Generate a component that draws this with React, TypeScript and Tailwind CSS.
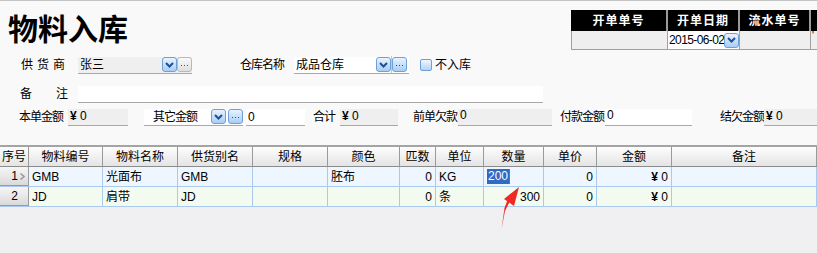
import React from 'react';

const font = { fontFamily: "'Liberation Sans','Noto Sans CJK SC',sans-serif" };

function DropBtn({ gray = false }: { gray?: boolean }) {
  return (
    <div
      className={`w-[15px] h-[15px] rounded-[3px] border flex items-center justify-center shrink-0 ${
        gray ? 'border-[#b8b8b8] bg-gradient-to-b from-[#fafafa] to-[#dedede]' : 'border-[#6d9fd8] bg-gradient-to-b from-[#e8f3ff] to-[#a9cdf5]'
      }`}
    >
      <svg width="9" height="6" viewBox="0 0 9 6">
        <path d="M1 1 L4.5 4.5 L8 1" fill="none" stroke="#1f4f99" strokeWidth="2" />
      </svg>
    </div>
  );
}

function DotsBtn({ gray = false }: { gray?: boolean }) {
  return (
    <div
      className={`w-[15px] h-[15px] rounded-[3px] border flex items-end justify-center pb-[5px] gap-[2px] shrink-0 ${
        gray ? 'border-[#b8b8b8] bg-gradient-to-b from-[#fafafa] to-[#dedede]' : 'border-[#6d9fd8] bg-gradient-to-b from-[#e8f3ff] to-[#a9cdf5]'
      }`}
    >
      <span className={`w-px h-px ${gray ? 'bg-[#555]' : 'bg-[#1f4f99]'}`} />
      <span className={`w-px h-px ${gray ? 'bg-[#555]' : 'bg-[#1f4f99]'}`} />
      <span className={`w-px h-px ${gray ? 'bg-[#555]' : 'bg-[#1f4f99]'}`} />
    </div>
  );
}

function Field({ w, gray, children }: { w: string; gray?: boolean; children?: React.ReactNode }) {
  return (
    <div
      className={`${w} h-[17px] border-b border-[#a8a8a8] flex items-center pl-[2px] text-[12px] text-black leading-none shrink-0 ${
        gray ? 'bg-[#efefef]' : 'bg-white'
      }`}
    >
      {children}
    </div>
  );
}

function Label({ cls, children }: { cls: string; children: React.ReactNode }) {
  return <div className={`${cls} shrink-0 whitespace-nowrap tracking-[-1px]`}>{children}</div>;
}

function Yen() {
  return (
    <span className="-mt-[2px]">
      <b>¥</b> 0
    </span>
  );
}

const cols = [29, 74, 75, 75, 75, 72, 36, 48, 60, 53, 75, 145];
const heads = ['序号', '物料编号', '物料名称', '供货别名', '规格', '颜色', '匹数', '单位', '数量', '单价', '金额', '备注'];

type Row = { n: string; code: string; name: string; alias: string; color: string; pcs: string; unit: string; qty: string; price: string; amt: string };
const rows: Row[] = [
  { n: '1', code: 'GMB', name: '光面布', alias: 'GMB', color: '胚布', pcs: '0', unit: 'KG', qty: '200', price: '0', amt: '¥0' },
  { n: '2', code: 'JD', name: '肩带', alias: 'JD', color: '', pcs: '0', unit: '条', qty: '300', price: '0', amt: '¥0' },
];

export default function App() {
  return (
    <div className="w-[817px] h-[253px] overflow-hidden bg-[#f0f0f2] relative" style={font}>
      {/* form */}
      <div className="h-[145px] bg-[#f9f9f9] border-t border-[#c4c4c4]">
        <div className="flex h-[54px]">
          <div className="w-[571px] shrink-0 pl-[8px] pt-[8px]">
            <div className="text-[30px] font-bold leading-[36px] text-black" style={{ fontFamily: "'Noto Sans CJK SC',sans-serif" }}>
              物料入库
            </div>
          </div>
          <div className="mt-[9px] flex flex-col shrink-0">
            <div className="flex h-[21px] bg-black text-white text-[12px] font-bold">
              <div className="w-[97px] flex items-center justify-center border-r-2 border-[#9a9a9a] tracking-[1px]">开单单号</div>
              <div className="w-[72px] flex items-center justify-center border-r-2 border-[#9a9a9a] tracking-[1px]">开单日期</div>
              <div className="w-[71px] flex items-center justify-center border-r-2 border-[#9a9a9a] tracking-[1px]">流水单号</div>
              <div className="w-[40px]" />
            </div>
            <div className="flex h-[19px] bg-[#efefef] border-b border-[#a0a0a0] text-[12px]">
              <div className="w-[97px] border-l border-r border-[#a0a0a0]" />
              <div className="w-[72px] border-r border-[#a0a0a0] bg-white flex items-center pl-[1px] overflow-hidden">
                <span className="tracking-[-0.6px] whitespace-nowrap">2015-06-02</span>
                <div className="ml-auto mr-[1px]">
                  <DropBtn />
                </div>
              </div>
              <div className="w-[71px] border-r border-[#a0a0a0]" />
              <div className="w-[40px] pl-[1px] text-[10px] leading-[10px]">'</div>
            </div>
          </div>
        </div>

        {/* row 1 */}
        <div className="flex items-center h-[18px] mt-[1px] text-[12px] text-black">
          <div className="ml-[21px] w-[57px] tracking-[4px] shrink-0">供货商</div>
          <Field w="w-[114px]" gray>
            <span className="w-[82px]">张三</span>
            <DropBtn />
            <DotsBtn gray />
          </Field>
          <Label cls="ml-[48px] w-[54px]">仓库名称</Label>
          <Field w="w-[115px]">
            <span className="w-[80px]">成品仓库</span>
            <DropBtn />
            <span className="w-px h-[17px] bg-[#c8c8c8]" />
            <DotsBtn />
          </Field>
          <div className="ml-[11px] w-[12px] h-[12px] rounded-[2px] border border-[#6d9fd8] bg-gradient-to-b from-[#eef6ff] to-[#b4d3f5] shrink-0" />
          <div className="ml-[3px]">不入库</div>
        </div>

        {/* row 2 */}
        <div className="flex items-center h-[18px] mt-[11px] text-[12px] text-black">
          <div className="ml-[20px] w-[36px]">备</div>
          <div className="w-[22px]">注</div>
          <Field w="w-[465px]" />
        </div>

        {/* row 3 */}
        <div className="flex items-center h-[18px] mt-[5px] text-[12px] text-black whitespace-nowrap">
          <Label cls="ml-[19px] w-[49px]">本单金额</Label>
          <Field w="w-[60px]" gray><Yen /></Field>
          <Field w="w-[99px] ml-[16px]">
            <span className="ml-[7px] w-[58px] tracking-[-1px]">其它金额</span>
            <DropBtn />
            <span className="w-[2px]" />
            <DotsBtn />
          </Field>
          <Field w="w-[59px] ml-[3px]">0</Field>
          <Label cls="ml-[8px] w-[27px]">合计</Label>
          <Field w="w-[58px]" gray><Yen /></Field>
          <Label cls="ml-[15px] w-[45px]">前单欠款</Label>
          <Field w="w-[94px]" gray>
            <span className="-mt-[4px]">0</span>
          </Field>
          <Label cls="ml-[8px] w-[45px]">付款金额</Label>
          <Field w="w-[87px]">
            <span className="-mt-[4px]">0</span>
          </Field>
          <Label cls="ml-[28px] w-[44px]">结欠金额</Label>
          <Field w="w-[60px]" gray><Yen /></Field>
        </div>
      </div>

      {/* grid */}
      <div className="border-t-2 border-[#a4a4a4]">
        <div className="flex h-[20px] border-b border-[#8c8c8c]">
          {heads.map((h, i) => (
            <div
              key={h}
              style={{ width: cols[i] }}
              className="shrink-0 h-full flex items-center justify-center text-[12px] text-black border-r border-[#9a9a9a] bg-gradient-to-b from-[#fdfdfd] to-[#e4e4e4]"
            >
              {h}
            </div>
          ))}
        </div>
        {rows.map((r, ri) => {
          const cells = [r.code, r.name, r.alias, '', r.color, r.pcs, r.unit, r.qty, r.price, r.amt, ''];
          const right = [false, false, false, false, false, true, false, true, true, true, false];
          return (
            <div key={r.n} className={`flex h-[20px] border-b border-[#a9c9ee] ${ri === 0 ? 'bg-[#eef6ff]' : 'bg-[#f3fbf1]'}`}>
              <div
                style={{ width: cols[0] }}
                className="shrink-0 h-full flex items-center justify-end pr-[2px] text-[12px] border-r border-b border-[#9a9a9a] bg-gradient-to-b from-[#f6f6f6] to-[#dadada]"
              >
                <span>{r.n}</span>
                <span className="w-[8px] flex justify-center">
                  {ri === 0 && (
                    <svg width="5" height="7" viewBox="0 0 5 7">
                      <path d="M0.5 0.5 L4 3.5 L0.5 6.5" fill="none" stroke="#9a9a9a" strokeWidth="1.5" />
                    </svg>
                  )}
                </span>
              </div>
              {cells.map((c, ci) => (
                <div
                  key={ci}
                  style={{ width: cols[ci + 1] }}
                  className={`shrink-0 h-full flex items-center text-[12px] text-black border-r border-[#a9c9ee] px-[3px] ${
                    right[ci] && !(ri === 0 && ci === 7) ? 'justify-end' : 'justify-start'
                  }`}
                >
                  {ri === 0 && ci === 7 ? (
                    <span className="flex items-center">
                      <span className="bg-[#3169c6] text-white px-[1px] leading-[15px]">{c}</span>
                      <span className="w-px h-[15px] bg-[#c06010]" />
                    </span>
                  ) : ci === 9 ? (
                    <span>
                      <b>¥</b> 0
                    </span>
                  ) : (
                    c
                  )}
                </div>
              ))}
            </div>
          );
        })}
      </div>

      {/* red arrow overlay */}
      <svg className="absolute left-0 top-0 pointer-events-none" width="817" height="253">
        <polygon points="501.5,229 504.5,208 507.5,200 510,201 505,211" fill="#ee2a22" />
        <polygon points="504,199 519,187 514,206" fill="#ee2a22" />
      </svg>
    </div>
  );
}
